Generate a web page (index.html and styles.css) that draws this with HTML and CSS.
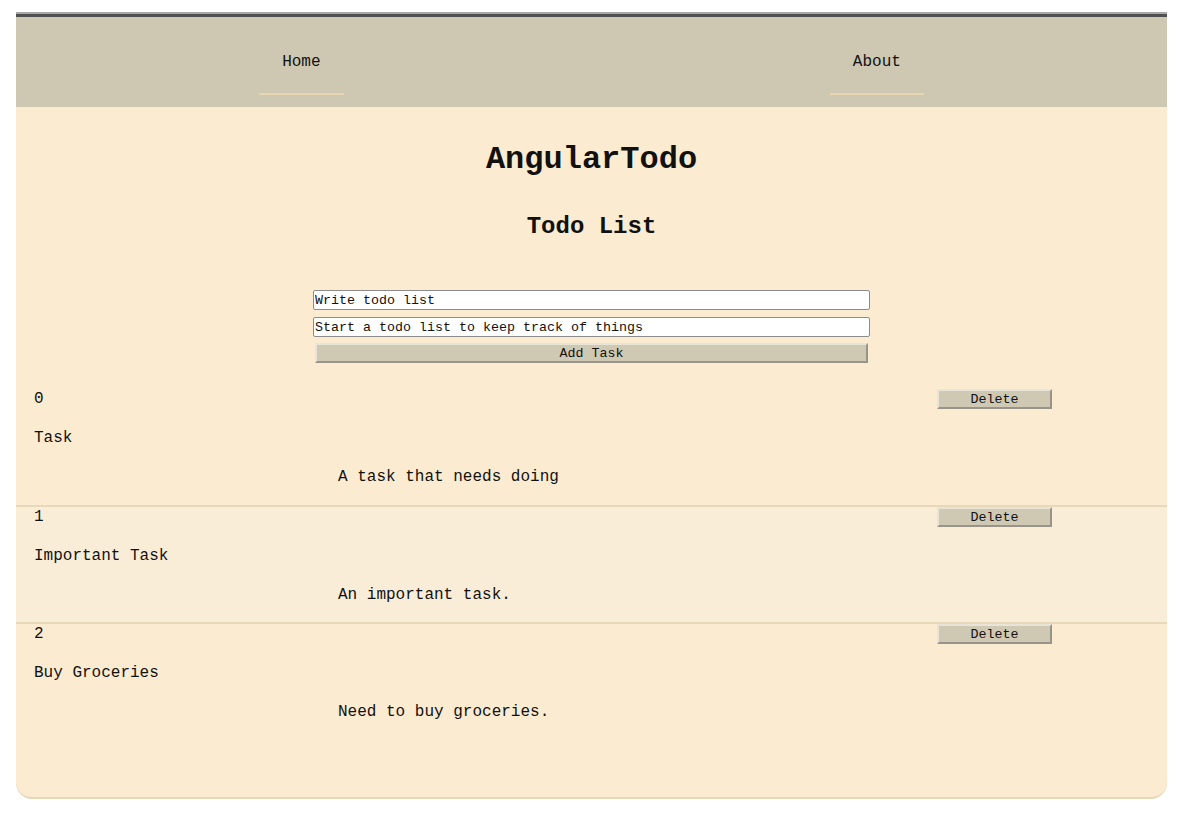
FILE: index.html
```html
<!DOCTYPE html>
<html lang="en">
<head>
<meta charset="utf-8">
<title>AngularTodo</title>
<link rel="stylesheet" href="styles.css">
</head>
<body>
<div class="app">
  <nav class="nav">
    <a class="nav-link" href="#">Home</a>
    <a class="nav-link" href="#">About</a>
  </nav>
  <main class="content">
    <h1 class="title">AngularTodo</h1>
    <h2 class="subtitle">Todo List</h2>
    <form class="add-form">
      <input class="field" type="text" value="Write todo list">
      <input class="field" type="text" value="Start a todo list to keep track of things">
      <button class="btn btn-add" type="button">Add Task</button>
    </form>
    <ul class="todo-list">
      <li class="todo">
        <div class="todo-head"><span class="todo-id">0</span><button class="btn btn-del" type="button">Delete</button></div>
        <p class="todo-name">Task</p>
        <p class="todo-desc">A task that needs doing</p>
      </li>
      <li class="todo todo-alt">
        <div class="todo-head"><span class="todo-id">1</span><button class="btn btn-del" type="button">Delete</button></div>
        <p class="todo-name">Important Task</p>
        <p class="todo-desc">An important task.</p>
      </li>
      <li class="todo">
        <div class="todo-head"><span class="todo-id">2</span><button class="btn btn-del" type="button">Delete</button></div>
        <p class="todo-name">Buy Groceries</p>
        <p class="todo-desc">Need to buy groceries.</p>
      </li>
    </ul>
  </main>
</div>
</body>
</html>
```

FILE: styles.css
```css
html, body {
  margin: 0;
  padding: 0;
  background: #ffffff;
}

body {
  padding: 14px 25px 24px 16px;
  font-family: "Liberation Mono", "Courier New", monospace;
  font-size: 16px;
  color: #111111;
}

.app {
  background: #fbebd0;
  border-top: 3px solid #505050;
  box-shadow: 0 -2px 0 #a9a9a9;
  border-bottom: 2px solid #e6d6b6;
  border-radius: 0 0 16px 16px;
}

.nav {
  display: flex;
  justify-content: space-around;
  background: #cec7b1;
  padding: 35px 0 12px;
}

.nav-link {
  display: block;
  line-height: 20px;
  padding: 0 23px 21px;
  border-bottom: 2px solid #e8d6b2;
  color: #111111;
  text-decoration: none;
}

.content {
  padding: 33px 0 57px;
}

.title {
  margin: 0;
  font-size: 32px;
  line-height: 40px;
  text-align: center;
}

.subtitle {
  margin: 32px 0 0;
  font-size: 24px;
  line-height: 30px;
  text-align: center;
}

.add-form {
  display: flex;
  flex-direction: column;
  align-items: center;
  gap: 7px;
  margin: 48px auto 0;
  width: 557px;
}

.field {
  box-sizing: border-box;
  width: 557px;
  height: 20px;
  margin: 0;
  padding: 1px 1px;
  border: 1px solid #8c8c8c;
  border-radius: 2px;
  background: #ffffff;
  font-family: "Liberation Mono", "Courier New", monospace;
  font-size: 13.33px;
  color: #111111;
}

.btn {
  box-sizing: border-box;
  height: 20px;
  margin: 0;
  padding: 1px 0 0;
  background: #cfc8b3;
  border-style: solid;
  border-width: 2px;
  border-color: #e9e4d8 #999489 #999489 #e9e4d8;
  font-family: "Liberation Mono", "Courier New", monospace;
  font-size: 13.33px;
  line-height: 15px;
  color: #111111;
}

.btn-add {
  width: 553px;
  margin-top: -1px;
}

.todo-list {
  list-style: none;
  margin: 26px 0 0;
  padding: 0;
}

.todo {
  padding: 0 18px 18px;
  border-bottom: 2px solid #e8d8b8;
}

.todo-alt {
  padding-bottom: 17px;
}

.todo:last-child {
  border-bottom: none;
}

.todo-alt {
  background: #faedd8;
}

.todo-head {
  display: flex;
  align-items: center;
  height: 20px;
}

.todo-id {
  flex: 1;
  line-height: 20px;
}

.btn-del {
  width: 115px;
  margin-right: 97px;
}

.todo-name {
  margin: 19px 0 0;
  line-height: 20px;
}

.todo-desc {
  margin: 19px 0 0 304px;
  line-height: 20px;
}
```
